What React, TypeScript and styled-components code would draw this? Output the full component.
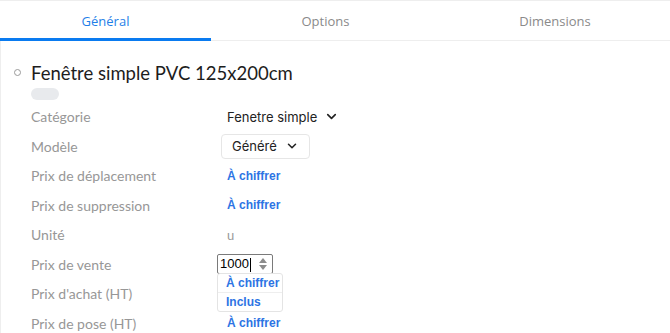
import React from 'react';
import styled, { createGlobalStyle } from 'styled-components';
import { ChevronDown } from 'lucide-react';

const GlobalStyle = createGlobalStyle`
  body {
    margin: 0;
    background: #fff;
    font-family: "Lato", "Open Sans", sans-serif;
  }
`;

const Page = styled.div`
  width: 670px;
  height: 333px;
  overflow: hidden;
  border-top: 1px solid #eeeeee;
  box-sizing: border-box;
`;

const TabBar = styled.div`
  display: flex;
  height: 40px;
  border-bottom: 1px solid #eeeeee;
  box-sizing: border-box;
`;

const Tab = styled.div<{ $active?: boolean; $width: number }>`
  width: ${({ $width }) => $width}px;
  display: flex;
  align-items: center;
  justify-content: center;
  font-family: "Open Sans", sans-serif;
  font-size: 13px;
  color: ${({ $active }) => ($active ? '#1f7fe8' : '#8a8a8a')};
  box-shadow: ${({ $active }) => ($active ? 'inset 0 -3px 0 #0a7bf0' : 'none')};
  margin-bottom: -1px;
`;

const Content = styled.div`
  border-left: 1px solid #eeeeee;
  padding: 18px 0 0 30px;
  height: 300px;
`;

const TitleRow = styled.div`
  position: relative;
  display: flex;
  align-items: center;
  height: 28px;
`;

const StatusDot = styled.span`
  position: absolute;
  left: -17px;
  top: 10px;
  width: 5px;
  height: 5px;
  border: 1px solid #9a9a9a;
  border-radius: 50%;
`;

const Title = styled.h1`
  margin: 0;
  font-family: "Lato", sans-serif;
  font-weight: 400;
  font-size: 18.5px;
  color: #1d1d1d;
`;

const Pill = styled.div`
  width: 28px;
  height: 12px;
  border-radius: 6px;
  background: #e8eaed;
  margin-top: 1px;
`;

const Fields = styled.div`
  display: grid;
  grid-template-columns: 196px 1fr;
  grid-auto-rows: 29.5px;
  margin-top: 2px;
`;

const Label = styled.div`
  display: flex;
  align-items: center;
  font-size: 14px;
  color: #979797;
`;

const Value = styled.div`
  position: relative;
  display: flex;
  align-items: center;
`;

const SelectText = styled.div`
  display: flex;
  align-items: center;
  gap: 7px;
  font-family: "Inter", sans-serif;
  font-size: 13px;
  color: #222;
`;

const SelectBox = styled(SelectText)`
  margin-left: -6px;
  height: 25px;
  padding: 0 10px;
  border: 1px solid #e6e6e6;
  border-radius: 4px;
  box-sizing: border-box;
  gap: 8px;
`;

const Link = styled.span`
  font-family: "Liberation Sans", Arial, sans-serif;
  font-weight: 700;
  font-size: 12px;
  color: #2d74e4;
`;

const Muted = styled.span`
  font-size: 13px;
  color: #999;
`;

const NumberInput = styled.div`
  margin-left: -10px;
  width: 56px;
  height: 20px;
  border: 1px solid #7a7a7a;
  border-radius: 2px;
  box-sizing: border-box;
  display: flex;
  align-items: center;
  justify-content: space-between;
  padding: 0 4px 0 2px;
  font-family: "Liberation Sans", Arial, sans-serif;
  font-size: 13px;
  color: #000;
`;

const Caret = styled.span`
  display: inline-block;
  width: 1px;
  height: 14px;
  background: #000;
  vertical-align: middle;
  margin-left: 1px;
`;

const Menu = styled.div`
  position: absolute;
  top: 23px;
  left: -10px;
  width: 66px;
  background: #fff;
  border: 1px solid #e4e4e4;
  border-radius: 3px;
  box-sizing: border-box;
  z-index: 2;
`;

const MenuItem = styled.div`
  height: 18px;
  display: flex;
  align-items: center;
  padding-left: 8px;
  & + & {
    border-top: 1px solid #eeeeee;
  }
`;

const Spinner = () => (
  <svg width="10" height="14" viewBox="0 0 10 14">
    <path d="M5 1 L9 6 H1 Z" fill="#8c8c8c" />
    <path d="M5 13 L9 8 H1 Z" fill="#8c8c8c" />
  </svg>
);

export default function App() {
  return (
    <Page>
      <GlobalStyle />
      <TabBar>
        <Tab $active $width={211}>Général</Tab>
        <Tab $width={229}>Options</Tab>
        <Tab $width={230}>Dimensions</Tab>
      </TabBar>
      <Content>
        <TitleRow>
          <StatusDot />
          <Title>Fenêtre simple PVC 125x200cm</Title>
        </TitleRow>
        <Pill />
        <Fields>
          <Label>Catégorie</Label>
          <Value>
            <SelectText>
              Fenetre simple <ChevronDown size={15} strokeWidth={2.6} />
            </SelectText>
          </Value>
          <Label>Modèle</Label>
          <Value>
            <SelectBox>
              Généré <ChevronDown size={14} strokeWidth={2.6} />
            </SelectBox>
          </Value>
          <Label>Prix de déplacement</Label>
          <Value><Link>À chiffrer</Link></Value>
          <Label>Prix de suppression</Label>
          <Value><Link>À chiffrer</Link></Value>
          <Label>Unité</Label>
          <Value><Muted>u</Muted></Value>
          <Label>Prix de vente</Label>
          <Value>
            <NumberInput>
              <span>1000<Caret /></span>
              <Spinner />
            </NumberInput>
            <Menu>
              <MenuItem><Link>À chiffrer</Link></MenuItem>
              <MenuItem><Link>Inclus</Link></MenuItem>
            </Menu>
          </Value>
          <Label>Prix d'achat (HT)</Label>
          <Value />
          <Label>Prix de pose (HT)</Label>
          <Value><Link>À chiffrer</Link></Value>
        </Fields>
      </Content>
    </Page>
  );
}
